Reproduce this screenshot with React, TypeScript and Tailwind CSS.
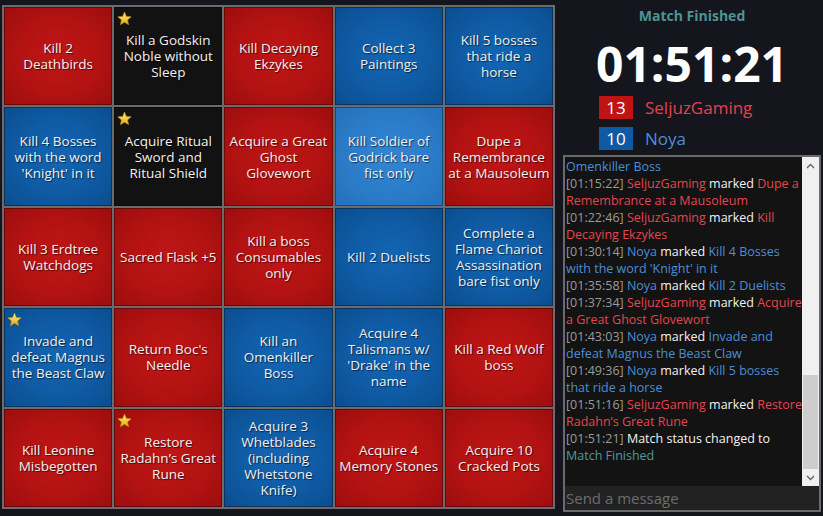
import React from "react";

type C = "r" | "b" | "k" | "l";
const cells: { t: string[]; c: C; s?: boolean }[] = [
  { t: ["Kill 2", "Deathbirds"], c: "r" },
  { t: ["Kill a Godskin", "Noble without", "Sleep"], c: "k", s: true },
  { t: ["Kill Decaying", "Ekzykes"], c: "r" },
  { t: ["Collect 3", "Paintings"], c: "b" },
  { t: ["Kill 5 bosses", "that ride a", "horse"], c: "b" },
  { t: ["Kill 4 Bosses", "with the word", "'Knight' in it"], c: "b" },
  { t: ["Acquire Ritual", "Sword and", "Ritual Shield"], c: "k", s: true },
  { t: ["Acquire a Great", "Ghost", "Glovewort"], c: "r" },
  { t: ["Kill Soldier of", "Godrick bare", "fist only"], c: "l" },
  { t: ["Dupe a", "Remembrance", "at a Mausoleum"], c: "r" },
  { t: ["Kill 3 Erdtree", "Watchdogs"], c: "r" },
  { t: ["Sacred Flask +5"], c: "r" },
  { t: ["Kill a boss", "Consumables", "only"], c: "r" },
  { t: ["Kill 2 Duelists"], c: "b" },
  { t: ["Complete a", "Flame Chariot", "Assassination", "bare fist only"], c: "b" },
  { t: ["Invade and", "defeat Magnus", "the Beast Claw"], c: "b", s: true },
  { t: ["Return Boc's", "Needle"], c: "r" },
  { t: ["Kill an", "Omenkiller", "Boss"], c: "b" },
  { t: ["Acquire 4", "Talismans w/", "'Drake' in the", "name"], c: "b" },
  { t: ["Kill a Red Wolf", "boss"], c: "r" },
  { t: ["Kill Leonine", "Misbegotten"], c: "r" },
  { t: ["Restore", "Radahn\u2019s Great", "Rune"], c: "r", s: true },
  { t: ["Acquire 3", "Whetblades", "(including", "Whetstone", "Knife)"], c: "b" },
  { t: ["Acquire 4", "Memory Stones"], c: "r" },
  { t: ["Acquire 10", "Cracked Pots"], c: "r" },
];

const bg: Record<C, string> = {
  r: "bg-[radial-gradient(ellipse_at_center,#c01616_0%,#b21212_55%,#9c0d0d_100%)]",
  b: "bg-[radial-gradient(ellipse_at_center,#1366b4_0%,#0f5aa3_55%,#0b4d8e_100%)]",
  k: "bg-[#121212]",
  l: "bg-[radial-gradient(ellipse_at_center,#3386d2_0%,#2b7cc8_55%,#2470bb_100%)]",
};

const Star = () => (
  <svg width="15" height="15" viewBox="0 0 24 24" className="absolute left-[3px] top-[4px]">
    <defs>
      <linearGradient id="sg" x1="0" y1="0" x2="0" y2="1">
        <stop offset="0" stopColor="#fff27a" />
        <stop offset="1" stopColor="#e6a91a" />
      </linearGradient>
    </defs>
    <polygon
      points="12,1.5 15,8.6 22.7,9.3 16.9,14.4 18.6,22 12,18 5.4,22 7.1,14.4 1.3,9.3 9,8.6"
      fill="url(#sg)"
      stroke="#b8860b"
      strokeWidth="1"
    />
  </svg>
);

const R = "text-[#e4454f]";
const B = "text-[#4a8fd6]";
const T = "text-[#9b9b9b]";
const W = "text-[#f2f2f2]";
const TE = "text-[#4f9a9a]";

type Seg = [string, string];
const chat: Seg[][] = [
  [["Omenkiller Boss", B]],
  [["[01:15:22] ", T], ["SeljuzGaming ", R], ["marked ", W], ["Dupe a", R]],
  [["Remembrance at a Mausoleum", R]],
  [["[01:22:46] ", T], ["SeljuzGaming ", R], ["marked ", W], ["Kill", R]],
  [["Decaying Ekzykes", R]],
  [["[01:30:14] ", T], ["Noya ", B], ["marked ", W], ["Kill 4 Bosses", B]],
  [["with the word 'Knight' in it", B]],
  [["[01:35:58] ", T], ["Noya ", B], ["marked ", W], ["Kill 2 Duelists", B]],
  [["[01:37:34] ", T], ["SeljuzGaming ", R], ["marked ", W], ["Acquire", R]],
  [["a Great Ghost Glovewort", R]],
  [["[01:43:03] ", T], ["Noya ", B], ["marked ", W], ["Invade and", B]],
  [["defeat Magnus the Beast Claw", B]],
  [["[01:49:36] ", T], ["Noya ", B], ["marked ", W], ["Kill 5 bosses", B]],
  [["that ride a horse", B]],
  [["[01:51:16] ", T], ["SeljuzGaming ", R], ["marked ", W], ["Restore", R]],
  [["Radahn\u2019s Great Rune", R]],
  [["[01:51:21] ", T], ["Match status changed to", W]],
  [["Match Finished", TE]],
];

export default function App() {
  return (
    <div
      className="w-[823px] h-[516px] bg-[#15151d] flex overflow-hidden"
      style={{ fontFamily: "'Open Sans', 'Noto Sans', sans-serif" }}
    >
      <div className="pl-[2px] pt-[5px]">
        <div className="w-[553px] h-[504px] bg-[#6b6b6b] p-[2px] grid grid-cols-5 grid-rows-5 gap-[2px]">
          {cells.map((c, i) => (
            <div
              key={i}
              className={`relative flex items-center justify-center text-center shadow-[inset_0_0_0_1px_rgba(0,0,0,0.35)] ${bg[c.c]}`}
            >
              {c.s && <Star />}
              <span className="whitespace-nowrap text-[13.5px] leading-[16px] text-[#f4f0f0] [text-shadow:1px_1px_1px_rgba(0,0,0,0.6)]">
                {c.t.map((l, j) => (
                  <React.Fragment key={j}>
                    {j > 0 && <br />}
                    {l}
                  </React.Fragment>
                ))}
              </span>
            </div>
          ))}
        </div>
      </div>
      <div className="ml-[8px] w-[258px] flex flex-col">
        <div className="text-center text-[14px] font-bold text-[#4f9494] mt-[6px] leading-[20px]">
          Match Finished
        </div>
        <div className="text-center text-[48px] font-bold text-white leading-[52px] mt-[12px]">
          01:51:21
        </div>
        <div className="ml-[36px] mt-[5px] flex flex-col gap-[5px]">
          <div className="flex items-center">
            <div className="w-[34px] h-[23px] bg-[#c01313] text-white text-[17px] leading-[23px] text-center">13</div>
            <div className="ml-[12px] text-[17px] text-[#e2424d]">SeljuzGaming</div>
          </div>
          <div className="flex items-center">
            <div className="w-[34px] h-[23px] bg-[#0f5aa5] text-white text-[17px] leading-[23px] text-center">10</div>
            <div className="ml-[12px] text-[17px] text-[#4a8fd6]">Noya</div>
          </div>
        </div>
        <div className="mt-[4px] h-[357px] border-2 border-[#6a6a6a] bg-[#131313] flex flex-col">
          <div className="flex flex-1 min-h-0">
            <div className="flex-1 overflow-hidden pl-[1px] pt-[1px] text-[12.5px] leading-[17px]">
              {chat.map((line, i) => (
                <div key={i} className="whitespace-nowrap h-[17px]">
                  {line.map(([txt, cls], j) => (
                    <span key={j} className={`${cls} whitespace-pre`}>
                      {txt}
                    </span>
                  ))}
                </div>
              ))}
            </div>
            <div className="w-[17px] bg-[#f0f0f0] flex flex-col items-center">
              <div className="h-[17px] flex items-center justify-center">
                <svg width="9" height="6" viewBox="0 0 9 6">
                  <path d="M1 5 L4.5 1.5 L8 5" stroke="#606060" strokeWidth="1.3" fill="none" />
                </svg>
              </div>
              <div className="flex-1" />
              <div className="w-[15px] h-[94px] bg-[#cdcdcd]" />
              <div className="h-[17px] flex items-center justify-center">
                <svg width="9" height="6" viewBox="0 0 9 6">
                  <path d="M1 1 L4.5 4.5 L8 1" stroke="#606060" strokeWidth="1.3" fill="none" />
                </svg>
              </div>
            </div>
          </div>
          <div className="h-[24px] bg-[#222222] flex items-center pl-[1px] text-[15px] text-[#6c6c6c]">
            Send a message
          </div>
        </div>
      </div>
    </div>
  );
}
